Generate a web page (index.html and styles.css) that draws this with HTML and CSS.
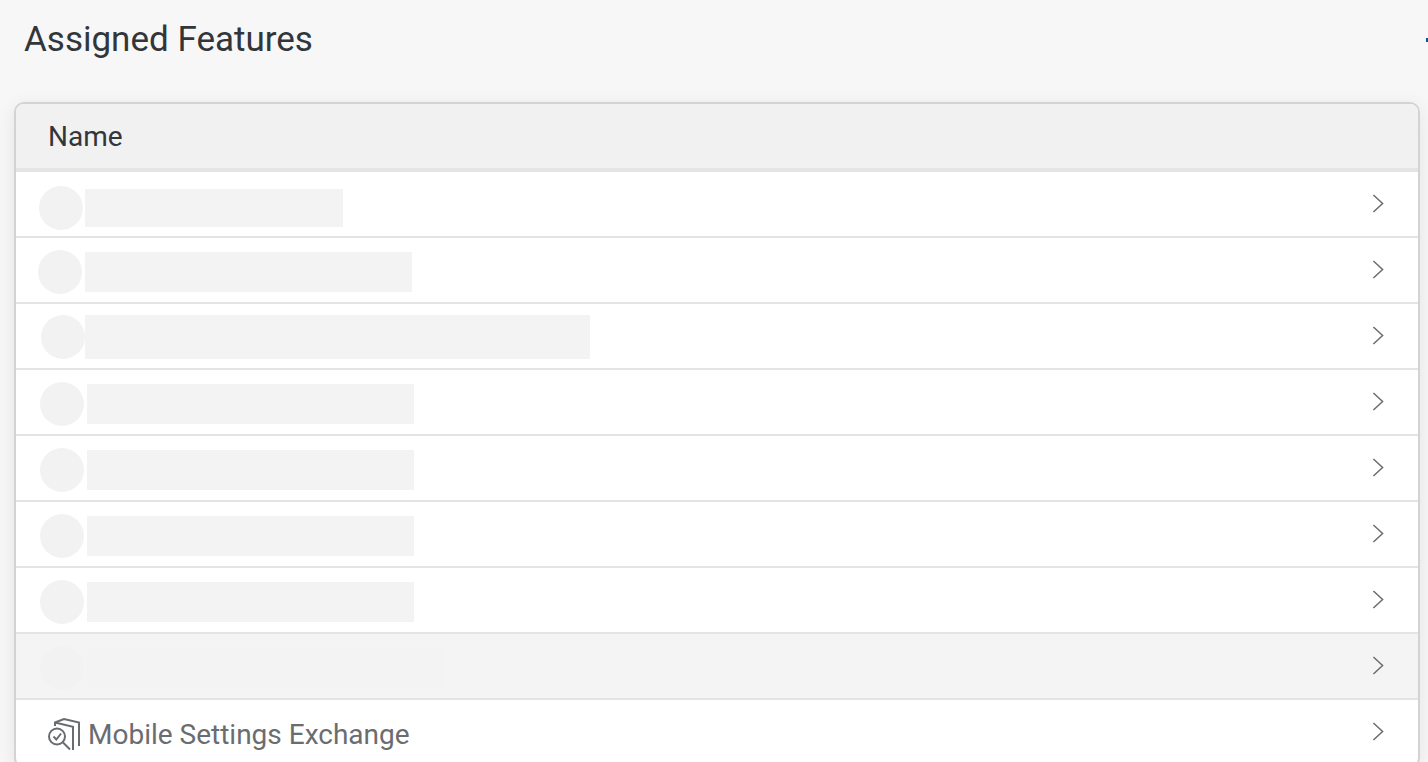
FILE: index.html
```html
<!DOCTYPE html>
<html lang="en">
<head>
<meta charset="utf-8">
<title>Assigned Features</title>
<link rel="stylesheet" href="styles.css">
</head>
<body>
<svg class="sprite" aria-hidden="true">
  <symbol id="chevron" viewBox="0 0 12 20"><path d="M1.400 1 10.600 9.500 1.400 18" fill="none" stroke="currentColor" stroke-width="1.500"/></symbol>
</svg>
<header class="title-bar">
  <h1 class="title">Assigned Features</h1>
  <button class="add" type="button" aria-label="Add feature"><svg width="24" height="24" viewBox="0 0 24 24" aria-hidden="true"><path d="M0 12h24M12 0v24" stroke="currentColor" stroke-width="4"/></svg></button>
</header>
<main class="card">
  <table class="features">
    <thead>
      <tr><th class="head" colspan="2" scope="col">Name</th></tr>
    </thead>
    <tbody>
      <tr class="row"><td class="name"><div class="skeleton skeleton-low"><span class="dot"></span><span class="bar bar-short"></span></div></td><td class="nav"><button class="open" type="button" aria-label="Open"><svg class="chevron"><use href="#chevron"/></svg></button></td></tr>
      <tr class="row"><td class="name"><div class="skeleton skeleton-left"><span class="dot"></span><span class="bar"></span></div></td><td class="nav"><button class="open" type="button" aria-label="Open"><svg class="chevron"><use href="#chevron"/></svg></button></td></tr>
      <tr class="row"><td class="name"><div class="skeleton skeleton-joined"><span class="dot"></span><span class="bar bar-long"></span></div></td><td class="nav"><button class="open" type="button" aria-label="Open"><svg class="chevron"><use href="#chevron"/></svg></button></td></tr>
      <tr class="row"><td class="name"><div class="skeleton"><span class="dot"></span><span class="bar"></span></div></td><td class="nav"><button class="open" type="button" aria-label="Open"><svg class="chevron"><use href="#chevron"/></svg></button></td></tr>
      <tr class="row"><td class="name"><div class="skeleton"><span class="dot"></span><span class="bar"></span></div></td><td class="nav"><button class="open" type="button" aria-label="Open"><svg class="chevron"><use href="#chevron"/></svg></button></td></tr>
      <tr class="row"><td class="name"><div class="skeleton"><span class="dot"></span><span class="bar"></span></div></td><td class="nav"><button class="open" type="button" aria-label="Open"><svg class="chevron"><use href="#chevron"/></svg></button></td></tr>
      <tr class="row"><td class="name"><div class="skeleton"><span class="dot"></span><span class="bar"></span></div></td><td class="nav"><button class="open" type="button" aria-label="Open"><svg class="chevron"><use href="#chevron"/></svg></button></td></tr>
      <tr class="row row-hover"><td class="name"><div class="skeleton"><span class="dot"></span><span class="bar bar-medium"></span></div></td><td class="nav"><button class="open" type="button" aria-label="Open"><svg class="chevron"><use href="#chevron"/></svg></button></td></tr>
      <tr class="row"><td class="name"><div class="feature"><svg class="feature-icon" viewBox="0 0 32 32" aria-hidden="true"><g fill="none" stroke="currentColor" stroke-width="2"><path d="M7 8V4.500L16 1l15 3.500V28M7 4.500l18 4.300V32"/><circle cx="9" cy="18.500" r="8"/><path d="M14.800 24.300 22 31.500M5.500 18.500l2.800 3 4.800-6"/></g></svg><span>Mobile Settings Exchange</span></div></td><td class="nav"><button class="open" type="button" aria-label="Open"><svg class="chevron"><use href="#chevron"/></svg></button></td></tr>
    </tbody>
  </table>
</main>
</body>
</html>
```
FILE: styles.css
```css
* {
  box-sizing: border-box;
}

body {
  margin: 0;
  background: #f7f7f7;
  color: #32363a;
  font-family: Roboto, "Liberation Sans", sans-serif;
  font-size: 28px;
  overflow: hidden;
}

.sprite {
  display: block;
  width: 0;
  height: 0;
}

button {
  display: flex;
  padding: 0;
  border: 0;
  background: none;
}

.title-bar {
  display: flex;
  align-items: center;
  justify-content: space-between;
  height: 80px;
  padding-left: 24px;
}

.title {
  margin: 0;
  font-size: 35px;
  font-weight: 400;
  line-height: 80px;
}

/* The add action continues past the right edge of the pane. */
.add {
  flex: none;
  margin-right: -22px;
  color: #0854a0;
}

.card {
  margin: 22px 8px 0 14px;
  border: 2px solid #d3d3d3;
  border-radius: 10px;
  background: #fff;
  box-shadow: 0 4px 20px rgba(0, 0, 0, 0.08);
  overflow: hidden;
}

.features {
  width: 100%;
  border-spacing: 0;
}

.head {
  height: 68px;
  padding: 0 32px;
  border-bottom: 4px solid #e4e4e4;
  background: #f1f1f1;
  font-weight: 400;
  text-align: left;
}

.name,
.nav {
  height: 66px;
  padding: 0;
  border-bottom: 2px solid #e4e4e4;
}

.name {
  vertical-align: top;
}

.nav {
  width: 64px;
}

.row-hover {
  background: #f4f4f4;
}

.skeleton {
  display: flex;
  align-items: center;
  gap: 3px;
  padding: 12px 0 0 24px;
}

.skeleton-low {
  gap: 2px;
  padding: 14px 0 0 23px;
}

.skeleton-left {
  padding-left: 22px;
}

.skeleton-joined {
  gap: 0;
  padding: 11px 0 0 25px;
}

.dot {
  width: 44px;
  height: 44px;
  border-radius: 50%;
  background: #f2f2f2;
}

.bar {
  width: 327px;
  height: 40px;
  background: #f3f3f3;
}

.bar-short {
  width: 258px;
  height: 38px;
}

.bar-medium {
  width: 357px;
  height: 42px;
}

.bar-long {
  width: 505px;
  height: 44px;
}

.feature {
  display: flex;
  align-items: center;
  gap: 8px;
  height: 68px;
  padding-left: 32px;
  margin-bottom: -4px;
  color: #6a6d70;
}

.feature-icon {
  width: 32px;
  height: 32px;
}

.open {
  margin-left: 18px;
  color: #6a6d70;
}

.chevron {
  width: 12px;
  height: 20px;
}
```
